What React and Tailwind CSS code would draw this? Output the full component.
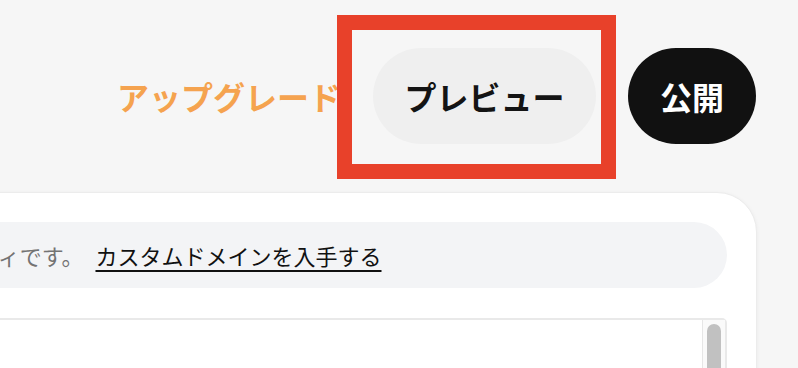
// App.jsx
const FONT = { fontFamily: '"Noto Sans CJK JP", "Noto Sans", sans-serif' };

const Header = () => {
  return (
    <div className="flex items-center justify-end gap-8 pt-[48px] pb-[48px] pr-[1px]">
      <span className="text-[32px] font-bold text-[#f5a34f] leading-none whitespace-nowrap">
        アップグレード
      </span>

      {/* Preview button with highlight frame */}
      <div className="relative">
        <button className="h-[96px] w-[223px] rounded-full bg-[#efefef] text-[32px] font-bold text-[#141414] leading-none">
          プレビュー
        </button>
        <div className="pointer-events-none absolute -left-[36px] -right-[20px] -top-[33px] -bottom-[35px] border-[15px] border-[#e8412a]" />
      </div>

      <button className="h-[96px] w-[128px] rounded-full bg-[#111111] text-[32px] font-bold text-white leading-none">
        公開
      </button>
    </div>
  );
};

const App = () => {
  return (
    <div className="h-[368px] w-[798px] overflow-hidden bg-[#f6f6f6] pr-[41px]" style={FONT}>
      <Header />

      {/* Site card */}
      <div className="ml-[-174px] rounded-[40px] border border-[#ececec] bg-white p-[29px] shadow-[0_1px_4px_rgba(0,0,0,0.05)]">
        <div className="flex h-[66px] items-center rounded-full bg-[#f3f4f6] pl-[33px] text-[22px] whitespace-nowrap">
          <span className="text-[#737373]">コミュニティです。</span>
          <a href="#" className="ml-[12px] text-[#111111] underline decoration-2 underline-offset-[5px]">
            カスタムドメインを入手する
          </a>
        </div>

        <div className="mt-[30px] flex h-[200px] justify-end rounded-[5px] border-2 border-[#e9e9e9]">
          <div className="w-[23px] border-l border-[#e6e6e6] bg-[#fafafa] px-[4px] pt-[4px]">
            <div className="h-[120px] rounded-full bg-[#c1c1c1]" />
          </div>
        </div>
      </div>
    </div>
  );
};

export default App;
